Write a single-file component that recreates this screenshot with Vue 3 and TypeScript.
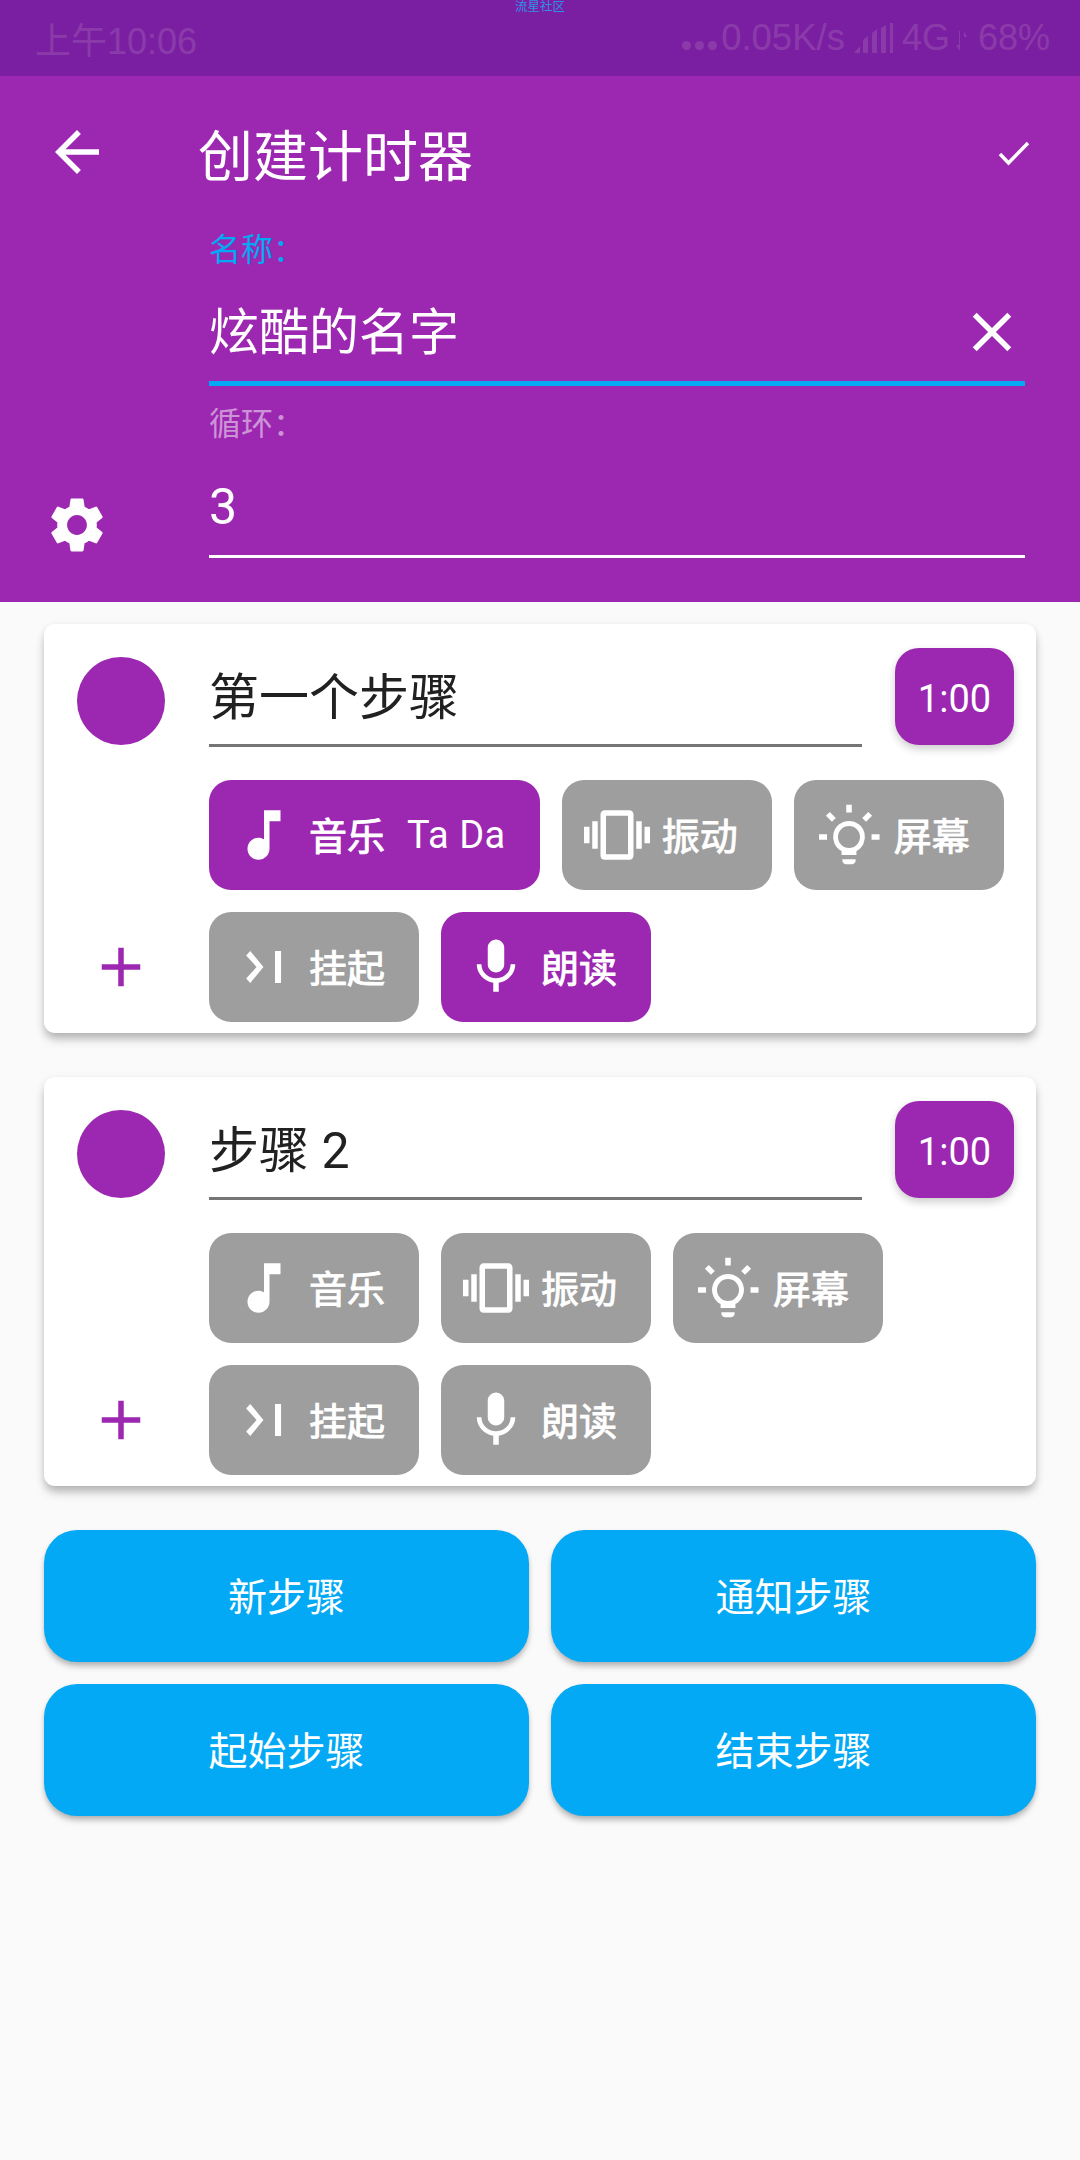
<template>
  <div class="page">
    <div class="status">
      <span class="wm">流星社区</span>
      <span class="clock">上午10:06</span>
      <div class="status-right">
        <span class="dots"><i></i><i></i><i></i></span>
        <span class="speed">0.05K/s</span>
        <svg class="signal" width="40" height="30" viewBox="0 0 40 30">
          <path d="M0 30 6 23v7zM9 30V17l5-4v17zM18 30V10l5-4v24zM27 30V5l5-3v28zM36 30V0h3v30z" />
        </svg>
        <span class="net">4G</span>
        <svg class="arrows" width="12" height="20" viewBox="0 0 12 20">
          <path d="M3 0v14H0l4 6V0zM8 20V6h3L8 0z" />
        </svg>
        <span class="battery">68%</span>
      </div>
    </div>

    <header class="header">
      <div class="toolbar">
        <svg class="icon back" viewBox="0 0 24 24">
          <path d="M20 11H7.83l5.59-5.59L12 4l-8 8 8 8 1.41-1.41L7.83 13H20v-2z" />
        </svg>
        <span class="title">创建计时器</span>
        <svg class="check" width="32" height="26" viewBox="0 0 32 26">
          <path d="M2 13l8.500 9L30 2" />
        </svg>
      </div>
      <div class="field name-field">
        <div class="label active">名称：</div>
        <div class="input focus">
          <span>炫酷的名字</span>
          <svg class="icon clear" viewBox="0 0 24 24">
            <path d="M19 6.410L17.590 5 12 10.590 6.410 5 5 6.410 10.590 12 5 17.590 6.410 19 12 13.410 17.590 19 19 17.590 13.410 12z" />
          </svg>
        </div>
      </div>
      <div class="loop-row">
        <svg class="icon gear" viewBox="0 0 24 24">
          <path :d="gearPath" />
        </svg>
        <div class="field">
          <div class="label">循环：</div>
          <div class="input">
            <span>3</span>
          </div>
        </div>
      </div>
    </header>

    <main class="content">
      <section v-for="step in steps" :key="step.name" class="card">
        <div class="card-top">
          <div class="circle"></div>
          <div class="step-name">{{ step.name }}</div>
          <button class="time">1:00</button>
        </div>
        <div class="card-bottom">
          <svg class="icon plus" viewBox="0 0 24 24">
            <path d="M19 13h-6v6h-2v-6H5v-2h6V5h2v6h6v2z" />
          </svg>
          <div class="chips">
            <div v-for="chip in chips" :key="chip.key" class="chip" :class="{ on: step.on.includes(chip.key) }">
              <svg class="icon" viewBox="0 0 24 24">
                <path :d="chip.icon" fill-rule="evenodd" />
              </svg>
              <span class="chip-label">{{ chip.label }}</span>
              <span v-if="chip.key === 'music' && step.tune" class="tune">{{ step.tune }}</span>
            </div>
          </div>
        </div>
      </section>

      <div class="actions">
        <button v-for="a in actions" :key="a" class="action">{{ a }}</button>
      </div>
    </main>
  </div>
</template>

<script setup lang="ts">
interface Step {
  name: string;
  tune: string;
  on: string[];
}

const gearPath =
  'M19.14 12.94c.04-.3.06-.61.06-.94 0-.32-.02-.64-.07-.94l2.03-1.58c.18-.14.23-.41.12-.61l-1.92-3.32c-.12-.22-.37-.29-.59-.22l-2.39.96c-.5-.38-1.03-.7-1.62-.94l-.36-2.54c-.04-.24-.24-.41-.48-.41h-3.84c-.24 0-.43.17-.47.41l-.36 2.54c-.59.24-1.13.57-1.62.94l-2.39-.96c-.22-.08-.47 0-.59.22L2.74 8.87c-.12.21-.08.47.12.61l2.03 1.58c-.05.3-.09.63-.09.94s.02.64.07.94l-2.03 1.58c-.18.14-.23.41-.12.61l1.92 3.32c.12.22.37.29.59.22l2.39-.96c.5.38 1.03.7 1.62.94l.36 2.54c.05.24.24.41.48.41h3.84c.24 0 .44-.17.47-.41l.36-2.54c.59-.24 1.13-.56 1.62-.94l2.39.96c.22.08.47 0 .59-.22l1.92-3.32c.12-.22.07-.47-.12-.61l-2.01-1.58zM12 15.6c-1.98 0-3.6-1.62-3.6-3.6s1.62-3.6 3.6-3.6 3.6 1.62 3.6 3.6-1.62 3.6-3.6 3.6z';

const chips = [
  { key: 'music', label: '音乐', icon: 'M12 3v10.55c-.59-.34-1.27-.55-2-.55-2.21 0-4 1.79-4 4s1.790 4 4 4 4-1.79 4-4V7h4V3h-6z' },
  {
    key: 'vibrate',
    label: '振动',
    icon: 'M0 15h2V9H0v6zm3 2h2V7H3v10zm19-8v6h2V9h-2zm-3 8h2V7h-2v10zM16.5 3h-9C6.67 3 6 3.67 6 4.5v15c0 .83.67 1.5 1.5 1.5h9c.83 0 1.5-.67 1.5-1.5v-15c0-.83-.67-1.5-1.5-1.5zM16 19H8V5h8v14z',
  },
  {
    key: 'screen',
    label: '屏幕',
    icon: 'M12 6.900a5.800 5.800 0 0 0-2.700 10.930V19.300h5.400v-1.470A5.800 5.800 0 0 0 12 6.900zM12 8.700a4 4 0 1 0 0 8 4 4 0 0 0 0-8zM9.600 20.800h4.800v.6c0 .7-.5 1.200-1.200 1.200h-2.400c-.7 0-1.200-.5-1.200-1.200zM11 1h2v2.800h-2zM1.100 11.700H4v2H1.100zM20.200 11.700h2.900v2h-2.900zM3.600 5l1.400-1.400 2.200 2.200-1.400 1.400zM20.400 5l-1.400-1.400-2.200 2.200 1.400 1.400z',
  },
  { key: 'pause', label: '挂起', icon: 'M7 6.200 5.500 7.800 9.300 12l-3.800 4.200L7 17.800 11.800 12zM16 6.200h2.200v11.600H16z' },
  {
    key: 'read',
    label: '朗读',
    icon: 'M12 14c1.660 0 2.990-1.340 2.990-3L15 5c0-1.660-1.340-3-3-3S9 3.340 9 5v6c0 1.660 1.340 3 3 3zm5.300-3c0 3-2.540 5.100-5.300 5.100S6.700 14 6.700 11H5c0 3.410 2.720 6.230 6 6.720V21h2v-3.280c3.280-.48 6-3.300 6-6.720h-1.700z',
  },
];

const steps: Step[] = [
  { name: '第一个步骤', tune: 'Ta Da', on: ['music', 'read'] },
  { name: '步骤 2', tune: '', on: [] },
];

const actions = ['新步骤', '通知步骤', '起始步骤', '结束步骤'];
</script>

<style>
body {
  background: #fafafa;
}
</style>

<style scoped>
.page {
  min-height: 2160px;
  background: #fafafa;
  font-family: Roboto, "Noto Sans CJK SC", sans-serif;
  color: #212121;
}

.status {
  position: relative;
  height: 76px;
  padding: 0 30px 0 35px;
  box-sizing: border-box;
  display: flex;
  align-items: center;
  justify-content: space-between;
  background: #7b1fa2;
  color: #8b3ba9;
  font-family: "Liberation Sans", "Noto Sans CJK SC", sans-serif;
  font-size: 36px;
}

.wm {
  position: absolute;
  top: -1px;
  left: 515px;
  font-size: 12.500px;
  line-height: 14px;
  color: #2f8fe8;
  font-family: "Noto Sans CJK SC", sans-serif;
}

.status-right {
  display: flex;
  align-items: center;
}

.dots {
  display: flex;
  gap: 4px;
  margin-top: 14px;
  margin-right: 4px;
}

.dots i {
  width: 9px;
  height: 9px;
  border-radius: 50%;
  background: #8b3ba9;
}

.speed {
  font-size: 36.500px;
}

.signal {
  fill: #8b3ba9;
  margin: 0 8px 0 9px;
}

.arrows {
  fill: #8b3ba9;
  margin: 6px 10px 0 6px;
}

.header {
  background: #9c27b0;
  color: #fff;
  padding-bottom: 44px;
}

.icon {
  width: 66px;
  height: 66px;
  flex: none;
  fill: currentColor;
}

.toolbar {
  height: 154px;
  display: flex;
  align-items: center;
  padding-left: 44px;
}

.back {
  margin-top: -2px;
}

.title {
  margin-left: 88px;
  font-size: 55px;
  margin-top: -2px;
}

.check {
  margin-left: auto;
  margin-right: 50px;
  margin-top: 2px;
  fill: none;
  stroke: #fff;
  stroke-width: 3.500;
}

.field {
  flex: 1;
  min-width: 0;
}

.name-field {
  margin: 0 55px 0 209px;
}

.label {
  height: 40px;
  line-height: 40px;
  font-size: 32px;
  color: rgba(255, 255, 255, 0.5);
}

.label.active {
  color: #03a9f4;
}

.input {
  height: 111px;
  display: flex;
  align-items: center;
  justify-content: space-between;
  font-size: 50px;
  border-bottom: 3px solid #fff;
}

.input span {
  margin-top: 14px;
  line-height: 60px;
}

.input.focus {
  border-bottom: 5px solid #03a9f4;
}

.clear {
  margin-top: 12px;
}

.loop-row {
  display: flex;
  align-items: flex-end;
  padding: 18px 55px 0 44px;
}

.gear {
  margin-right: 99px;
}

.content {
  padding: 22px 44px 0;
}

.card {
  background: #fff;
  border-radius: 11px;
  padding: 24px 22px 11px 0;
  margin-bottom: 44px;
  box-shadow: 0 7px 10px -1px rgba(0, 0, 0, 0.25), 0 2px 8px rgba(0, 0, 0, 0.07);
}

.card-top {
  display: flex;
  align-items: flex-end;
  margin-bottom: 33px;
}

.circle {
  width: 88px;
  height: 88px;
  border-radius: 50%;
  background: #9c27b0;
  margin: 0 44px 2px 33px;
  flex: none;
}

.step-name {
  flex: 1;
  min-width: 0;
  height: 96px;
  line-height: 100px;
  font-size: 50px;
  border-bottom: 3px solid #757575;
  margin-right: 33px;
}

.time {
  width: 119px;
  height: 97px;
  margin-bottom: 2px;
  border: none;
  border-radius: 24px;
  background: #9c27b0;
  color: #fff;
  font-family: inherit;
  font-size: 38px;
  padding: 4px 0 0;
  box-shadow: 0 4px 8px rgba(0, 0, 0, 0.2);
}

.card-bottom {
  display: flex;
  align-items: flex-end;
}

.plus {
  color: #9c27b0;
  margin: 0 55px 22px 44px;
}

.chips {
  flex: 1;
  display: flex;
  flex-wrap: wrap;
  gap: 22px;
}

.chip {
  height: 110px;
  border-radius: 22px;
  background: #9e9e9e;
  color: #fff;
  padding: 0 34px 0 22px;
  display: flex;
  align-items: center;
}

.chip.on {
  background: #9c27b0;
}

.chip-label {
  margin-left: 12px;
  margin-top: -4px;
  width: 76px;
  font-size: 38px;
  white-space: nowrap;
  -webkit-text-stroke: 0.9px #fff;
}

.tune {
  margin-left: 22px;
  font-size: 38px;
  letter-spacing: 0.5px;
}

.actions {
  display: grid;
  grid-template-columns: 1fr 1fr;
  gap: 22px;
}

.action {
  height: 132px;
  border: none;
  border-radius: 33px;
  background: #03a9f4;
  color: #fff;
  font-family: inherit;
  font-size: 39px;
  line-height: 1;
  padding: 4px 0 0;
  box-shadow: 0 5px 6px -1px rgba(0, 0, 0, 0.28), 0 1px 4px rgba(0, 0, 0, 0.06);
}
</style>
